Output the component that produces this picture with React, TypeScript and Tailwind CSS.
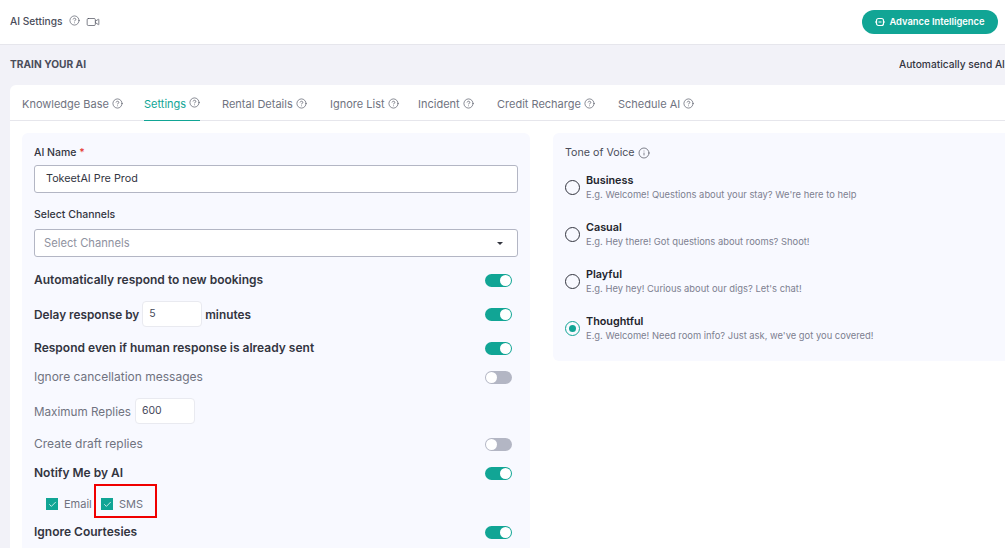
import { CircleHelp, Info, Video, Check } from "lucide-react"

const font = "font-['Inter','Noto_Sans',sans-serif]"
const tabs = ["Knowledge Base", "Settings", "Rental Details", "Ignore List", "Incident", "Credit Recharge", "Schedule AI"]
const tabGaps = ["w-[122px]", "w-[78px]", "w-[108px]", "w-[88px]", "w-[79px]", "w-[121px]", "w-[100px]"]

const tones = [
  { title: "Business", text: "E.g. Welcome! Questions about your stay? We're here to help" },
  { title: "Casual", text: "E.g. Hey there! Got questions about rooms? Shoot!" },
  { title: "Playful", text: "E.g. Hey hey! Curious about our digs? Let's chat!" },
  { title: "Thoughtful", text: "E.g. Welcome! Need room info? Just ask, we've got you covered!", active: true },
]

const strong = "text-[12px] font-semibold text-[#33353f]"
const soft = "text-[12px] text-[#70737f]"

function Toggle({ on }: { on?: boolean }) {
  return (
    <span className={`flex h-[13px] w-[27px] items-center rounded-full px-[1px] ${on ? "justify-end bg-[#11a595]" : "justify-start bg-[#b3b6c4]"}`}>
      <span className="h-[11px] w-[11px] rounded-full bg-white" />
    </span>
  )
}

function Tick({ label, className }: { label: string; className?: string }) {
  return (
    <span className={`flex items-center gap-[6px] ${className ?? ""}`}>
      <span className="flex h-3 w-3 items-center justify-center bg-[#11a595]">
        <Check className="h-[9px] w-[9px] text-white" strokeWidth={2} />
      </span>
      <span className="text-[11px] text-[#70737f]">{label}</span>
    </span>
  )
}

function SmallBox({ value }: { value: string }) {
  return (
    <span className="flex h-[26px] w-[60px] items-center rounded-[4px] border border-[#e9eaf0] bg-white px-[6px] pb-[1px] text-[10.5px] font-normal text-[#45485a]">
      {value}
    </span>
  )
}

function ChipIcon() {
  return (
    <svg viewBox="0 0 10 10" className="h-[10px] w-[10px]" fill="none" stroke="white">
      <rect x="1.5" y="1.5" width="7" height="7" rx="2" strokeWidth="1.2" />
      <path d="M3.5 5h3M0 4v2M10 4v2" strokeWidth="1" />
    </svg>
  )
}

export default function App() {
  return (
    <div className={`relative h-[548px] w-[1005px] overflow-hidden bg-[#f2f2f8] ${font}`}>
      <header className="flex h-[45px] items-center justify-between border-b border-[#e6e6ec] bg-white pl-[10px] pr-[7px]">
        <div className="flex items-center text-[#4a4d5a]">
          <span className="text-[10.2px] font-medium">AI Settings</span>
          <CircleHelp className="ml-[7px] h-[11px] w-[11px] -translate-y-px" strokeWidth={1.4} />
          <Video className="ml-[6px] h-[14px] w-[14px]" strokeWidth={1.2} />
        </div>
        <button className="flex h-[24px] w-[136px] items-center justify-center gap-[4px] rounded-full bg-[#11a595] text-[9.4px] font-semibold text-white">
          <ChipIcon />
          Advance Intelligence
        </button>
      </header>

      <div className="flex h-[40px] items-center justify-between overflow-hidden pl-[10px]">
        <span className="text-[10.2px] font-bold text-[#4a4d5a]">TRAIN YOUR AI</span>
        <span className="w-[106px] shrink-0 overflow-hidden whitespace-nowrap text-[10.2px] font-medium text-[#33353f]">
          Automatically send AI
        </span>
      </div>

      <div className="ml-[10px] h-[463px] rounded-tl-[6px] bg-white">
        <nav className="flex h-[36px] border-b border-[#e6e6ec] pl-[12px]">
          {tabs.map((t, i) => (
            <div key={t} className={`${tabGaps[i]} shrink-0`}>
              <span className={`inline-flex h-[36px] items-center gap-[3px] pt-[3px] text-[11px] ${t === "Settings" ? "border-b border-[#11a595] text-[#11a595]" : "text-[#70737f]"}`}>
                {t}
                <CircleHelp className="-mt-[3px] h-[11px] w-[11px] text-[#4a4d5a]" strokeWidth={1.4} />
              </span>
            </div>
          ))}
        </nav>

        <div className="flex items-start pl-[12px] pt-[12px]">
          <section className="h-[420px] w-[508px] shrink-0 rounded-[6px] bg-[#f8f9ff] px-[12px] pt-[13px]">
            <label className="block text-[10.5px] font-medium leading-[14px] text-[#33353f]">
              AI Name <span className="text-[#e53935]">*</span>
            </label>
            <div className="mt-[5px] flex h-[28px] items-center rounded-[3px] border border-[#b3b6c4] bg-white pl-[11px] text-[10.8px] text-[#33353f]">
              TokeetAI Pre Prod
            </div>
            <label className="mt-[15px] block text-[10.5px] font-medium leading-[14px] text-[#33353f]">Select Channels</label>
            <div className="mt-[7px] flex h-[28px] items-center justify-between rounded-[3px] border border-[#b3b6c4] bg-white pl-[9px] pr-[14px] text-[11.2px] text-[#8f92a0]">
              Select Channels
              <span className="h-0 w-0 border-x-[3px] border-t-[3px] border-x-transparent border-t-[#33353f]" />
            </div>

            <div className="mt-[14px] flex h-[18px] items-center justify-between pr-[6px]">
              <span className={strong}>Automatically respond to new bookings</span>
              <Toggle on />
            </div>
            <div className="mt-[11px] flex h-[28px] items-center justify-between pr-[6px]">
              <span className="flex items-center gap-[3px] text-[11.8px] font-semibold text-[#33353f]">
                <span className="pt-[3px]">Delay response by</span>
                <SmallBox value="5" />
                <span className="pt-[3px]">minutes</span>
              </span>
              <Toggle on />
            </div>
            <div className="mt-[11px] flex h-[18px] items-center justify-between pr-[6px]">
              <span className={strong}>Respond even if human response is already sent</span>
              <Toggle on />
            </div>
            <div className="mt-[11px] flex h-[18px] items-center justify-between pr-[6px]">
              <span className={soft}>Ignore cancellation messages</span>
              <Toggle />
            </div>
            <div className="mt-[11px] flex h-[28px] items-center gap-[4px]">
              <span className="pt-[3px] text-[11.7px] text-[#70737f]">Maximum Replies</span>
              <SmallBox value="600" />
            </div>
            <div className="mt-[10px] flex h-[18px] items-center justify-between pr-[6px]">
              <span className={soft}>Create draft replies</span>
              <Toggle />
            </div>
            <div className="mt-[11px] flex h-[18px] items-center justify-between pr-[6px]">
              <span className={strong}>Notify Me by AI</span>
              <Toggle on />
            </div>
            <div className="mt-[13px] flex h-[18px] items-center pl-[12px]">
              <Tick label="Email" className="w-[55px]" />
              <Tick label="SMS" />
            </div>
            <div className="mt-[10px] flex h-[18px] items-center justify-between pr-[6px]">
              <span className={strong}>Ignore Courtesies</span>
              <Toggle on />
            </div>
          </section>

          <section className="ml-[23px] h-[228px] w-[470px] shrink-0 rounded-[6px] bg-[#f8f9ff] pl-[12px] pt-[12px]">
            <div className="flex items-center gap-[3px] pt-[1px] text-[10.7px] leading-[14px] text-[#4a4d5a]">
              Tone of Voice <Info className="h-[12px] w-[12px]" strokeWidth={1.4} />
            </div>
            <div className="mt-[12px] flex flex-col gap-[17px]">
              {tones.map((t) => (
                <div key={t.title} className="flex h-[30px] items-center gap-[6px]">
                  <span className={`flex h-[15px] w-[15px] items-center justify-center rounded-full border ${t.active ? "border-[#11a595]" : "border-[#33353f]"}`}>
                    {t.active && <span className="h-[7px] w-[7px] rounded-full bg-[#11a595]" />}
                  </span>
                  <div>
                    <div className="text-[10.8px] font-semibold leading-[15px] text-[#22242c]">{t.title}</div>
                    <div className="text-[9.4px] leading-[14px] text-[#7d8090]">{t.text}</div>
                  </div>
                </div>
              ))}
            </div>
          </section>
        </div>
      </div>

      <div className="absolute left-[94px] top-[484px] h-[34px] w-[63px] border-2 border-[#f00000]" />
    </div>
  )
}
